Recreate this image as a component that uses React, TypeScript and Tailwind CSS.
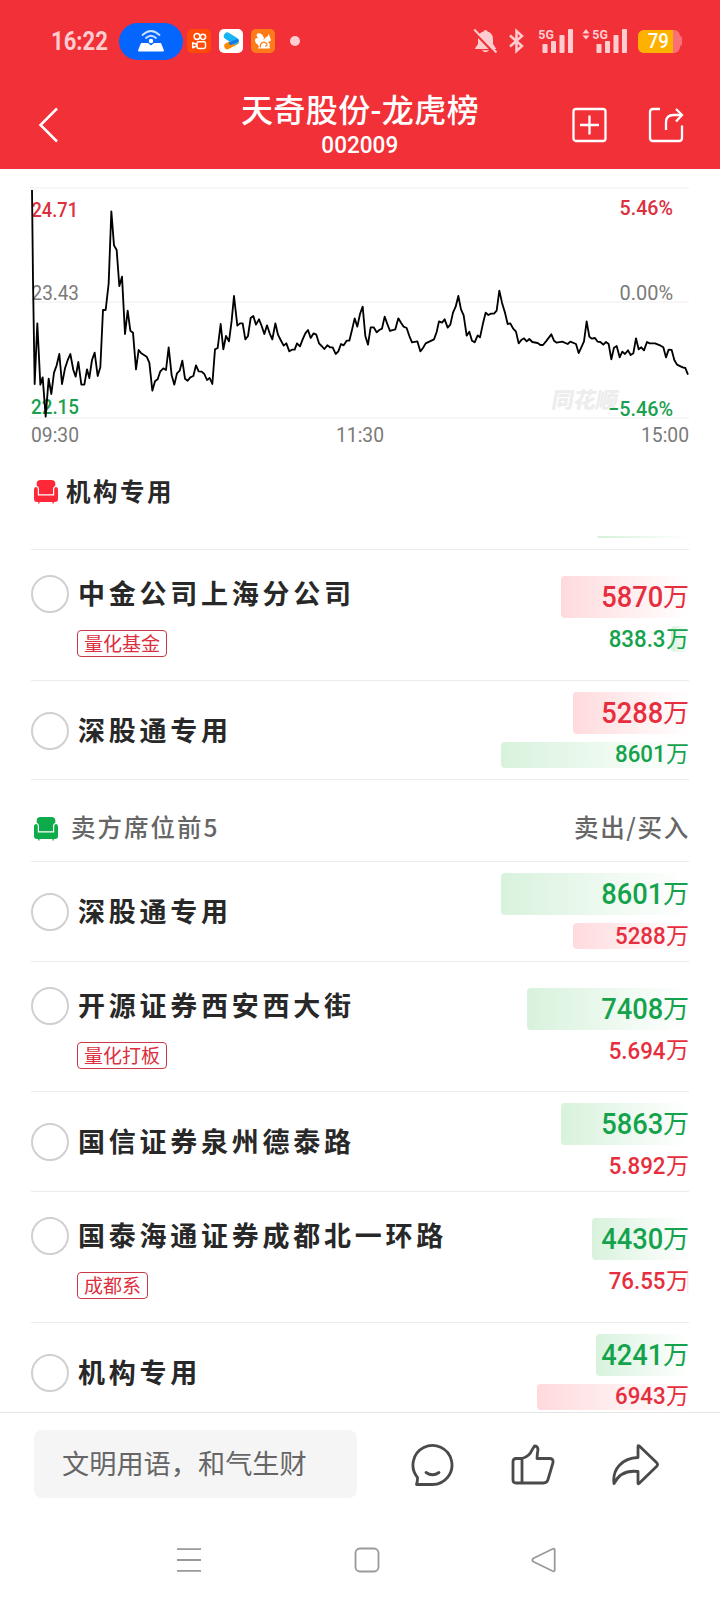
import clsx from "clsx"

type Side = "buy" | "sell"

interface Seat {
  name: string
  tag?: string
  buy: number
  sell: number
}

const buySeats: Seat[] = [
  { name: "中金公司上海分公司", tag: "量化基金", buy: 5870, sell: 838.3 },
  { name: "深股通专用", buy: 5288, sell: 8601 },
]

const sellSeats: Seat[] = [
  { name: "深股通专用", buy: 5288, sell: 8601 },
  { name: "开源证券西安西大街", tag: "量化打板", buy: 5.694, sell: 7408 },
  { name: "国信证券泉州德泰路", buy: 5.892, sell: 5863 },
  { name: "国泰海通证券成都北一环路", tag: "成都系", buy: 76.55, sell: 4430 },
  { name: "机构专用", buy: 6943, sell: 4241 },
]

const BAR_MAX = 188
const AMOUNT_MAX = 8601

// price line, in thirds of a pixel
const price =
  "36,30 39,300 44,612 52,430 61,614 68,592 77,710 86,596 94,642 102,578 110,556 118,522 126,612 135,565 144,538 151,522 160,570 167,590 175,546 184,614 193,614 201,568 208,594 216,540 224,518 233,588 241,562 249,390 257,390 266,310 274,94 282,196 290,210 298,318 306,290 315,462 323,392 331,452 339,458 348,568 356,510 364,520 380,530 388,548 397,632 405,604 413,598 421,574 430,565 438,570 446,502 455,586 463,614 471,580 479,572 487,542 495,596 503,602 511,592 520,588 528,556 536,574 545,575 553,582 561,600 569,594 577,612 585,508 593,504 602,432 610,508 618,468 627,484 635,422 642,348 652,437 660,430 668,430 676,478 684,468 692,414 700,408 708,434 717,418 725,438 733,462 741,436 749,460 757,478 766,430 774,464 782,480 791,497 799,490 808,514 816,509 824,509 831,490 840,499 848,478 856,460 864,450 872,474 881,460 889,464 897,490 905,498 913,507 922,496 930,502 938,502 947,522 955,514 963,492 971,496 980,482 988,482 996,450 1004,415 1012,440 1020,402 1028,380 1036,468 1044,494 1052,442 1061,442 1070,457 1078,450 1086,446 1094,410 1102,432 1110,453 1126,448 1135,415 1143,428 1151,440 1160,444 1168,468 1176,487 1192,484 1201,514 1209,504 1217,490 1242,478 1250,456 1257,424 1266,428 1274,418 1283,443 1291,434 1299,398 1307,380 1315,348 1323,388 1331,406 1340,467 1348,455 1356,482 1364,487 1373,466 1380,472 1389,430 1397,398 1405,405 1413,401 1422,401 1430,392 1438,332 1446,368 1455,398 1463,432 1471,430 1479,445 1488,455 1496,490 1504,480 1512,475 1520,484 1528,477 1537,486 1553,489 1561,495 1569,495 1578,484 1594,463 1602,482 1610,488 1627,485 1643,492 1651,485 1668,492 1676,519 1684,502 1692,484 1700,424 1708,470 1716,476 1725,474 1733,485 1741,486 1750,494 1758,486 1766,492 1774,538 1782,503 1790,498 1799,532 1807,515 1815,522 1824,511 1832,525 1840,520 1848,475 1856,508 1864,502 1872,511 1881,486 1889,490 1905,490 1922,497 1930,502 1938,532 1946,509 1955,510 1963,540 1971,554 1988,562 1996,564 2004,584"

const chartLabels = [
  { text: "24.71", x: 11.5, y: 36.5, width: 46.5, fill: "#dc2f40", weight: 500 },
  { text: "23.43", x: 11.5, y: 119.5, width: 47.5, fill: "#7a7a7a", weight: 400 },
  { text: "22.15", x: 11, y: 233.5, width: 48, fill: "#1ba050", weight: 500 },
  { text: "5.46%", x: 599.5, y: 34.5, width: 53.5, fill: "#dc2f40", weight: 500 },
  { text: "0.00%", x: 599.5, y: 119.5, width: 53.5, fill: "#7a7a7a", weight: 400 },
  { text: "−5.46%", x: 588, y: 235.5, width: 65, fill: "#1ba050", weight: 500 },
  { text: "09:30", x: 11, y: 261.5, width: 48, fill: "#7a7a7a", weight: 400 },
  { text: "11:30", x: 316, y: 261.5, width: 48, fill: "#7a7a7a", weight: 400 },
  { text: "15:00", x: 621, y: 261.5, width: 48, fill: "#7a7a7a", weight: 400 },
]

const Signal = () => (
  <svg className="-ml-0.5 overflow-visible" width="38" height="26" viewBox="-2 0 38 26" fill="#ffcdd0">
    <text x="-0.7" y="11" fontSize="13.5" fontWeight="700" textLength="15.5" lengthAdjust="spacingAndGlyphs" fontFamily="Roboto, sans-serif">
      5G
    </text>
    <rect x="3.5" y="16" width="5" height="9" rx="0.8" />
    <rect x="12" y="13" width="5" height="12" rx="0.8" />
    <rect x="20.5" y="7" width="5" height="18" rx="0.8" />
    <rect x="29" y="1" width="5" height="24" rx="0.8" />
  </svg>
)

const StatusBar = () => (
  <div className="flex h-[82px] items-center pl-[51px]">
    <span className="w-[68px] shrink-0 origin-left scale-x-[0.85] text-[26px] font-bold leading-none text-[#ffcdd0]">
      16:22
    </span>
    <div className="flex h-[37px] w-16 items-center justify-center rounded-full bg-[#0566ff]">
      <svg width="28" height="22" viewBox="0 0 28 22" fill="none">
        <path d="M5.5 5Q14-3 22.5 5M9 8q5-4.500 10 0" stroke="#cfe0ff" strokeWidth="1.8" strokeLinecap="round" />
        <circle cx="14" cy="11" r="2.2" fill="#fff" />
        <path d="M4 13h7l3 2.500 3-2.500h7L27 20.500q0 1-1 1H2q-1 0-1-1z" fill="#fff" />
      </svg>
    </div>
    <div className="ml-1 flex gap-2">
      <svg width="24" height="24" viewBox="0 0 24 24" fill="none" stroke="#fff" strokeWidth="1.5">
        <rect width="24" height="24" rx="5" fill="#ff4a08" stroke="none" />
        <circle cx="10" cy="7.5" r="2.9" />
        <circle cx="16" cy="7.8" r="2.6" />
        <rect x="10" y="12.8" width="8.5" height="6.6" rx="1.7" />
        <path d="M10 15.5l-4.300-1.800v5l4.300-1.800" strokeLinejoin="round" />
      </svg>
      <svg width="24" height="24" viewBox="0 0 24 24" fill="none">
        <rect width="24" height="24" rx="5" fill="#fff" />
        <path d="M8.5 17L16.500 12.700" stroke="#ff8a00" strokeWidth="6.5" strokeLinecap="round" />
        <path d="M8.3 7L16.300 12" stroke="#18b4f5" strokeWidth="7" strokeLinecap="round" />
        <path d="M11.5 14.500l6.500-2.800" stroke="#1677e8" strokeWidth="3" strokeLinecap="round" />
      </svg>
      <svg width="24" height="24" viewBox="0 0 24 24" fill="none">
        <rect width="24" height="24" rx="5" fill="#ff7b1a" />
        <path d="M7 19.5q2-2.500-1-4.500-3-2.500-1.500-5.500L7 9Q4.500 6.500 6.500 4.500 9.500 3.500 11.500 6t1 5q2-3 4.500-4V5q2 1 2 3.500 1.500 1.500.5 3.500l-2.500 1q2.500 2 1.500 4.500.8 1 0 2z" fill="#fff" />
        <path d="M9.500 18.500c-1-4 2.500-6.500 5.500-4.500 1.800 1.300 1 3.500-1 3" stroke="#ff7b1a" strokeWidth="1.200" />
      </svg>
    </div>
    <span className="ml-[15px] size-2.5 rounded-full bg-[#ffcdd0]" />
    <div className="ml-auto mr-[38px] flex items-center">
      <svg className="mr-[11px]" width="25" height="26" viewBox="0 0 25 26" fill="#ffcdd0">
        <path d="M12.500 2a2 2 0 0 1 2 1.500c3.600.9 5.500 3.700 5.500 7.500v5l3 4.500v.5H2v-.5L5 16v-5c0-3.800 1.900-6.600 5.500-7.500a2 2 0 0 1 2-1.500zM9 22.200h7c-1 2.400-6 2.400-7 0z" />
        <path d="M.5 3L22.500 26" stroke="#f13037" strokeWidth="3" />
        <path d="M1.200 1.500L23.500 24.500" stroke="#ffcdd0" strokeWidth="2" />
      </svg>
      <svg className="mr-[15px]" width="15" height="26" viewBox="0 0 15 26" fill="none" stroke="#ffcdd0" strokeWidth="2.5">
        <path d="M1 7.500L13 18l-5.500 5V3L13 8 1 18.500" />
      </svg>
      <Signal />
      <svg className="ml-[7px] mr-[3px]" width="8" height="26" viewBox="0 0 8 26" fill="#ffcdd0">
        <path d="M4 1l3.500 4.500h-7zM4 11.500L.5 7.500h7z" />
      </svg>
      <Signal />
      <div className="ml-[9px] flex h-[23px] items-center">
        <div className="flex h-full w-[42px] overflow-hidden rounded-[6px] bg-[#fa7077]">
          <div className="flex w-[35px] items-center justify-center bg-[#ffb100] pl-1.5">
            <span className="scale-x-[0.93] text-[20px] font-medium leading-none text-white">79</span>
          </div>
        </div>
        <span className="h-2.5 w-[2px] rounded-r-sm bg-[#fa7077]" />
      </div>
    </div>
  </div>
)

const Header = () => (
  <header className="h-[169px] shrink-0 bg-[#f13037] text-white">
    <StatusBar />
    <div className="flex h-[87px] items-start justify-between pl-[38px] pr-[36px]">
      <svg className="mt-[25px]" width="110" height="36" viewBox="0 0 110 36" fill="none" stroke="#fff" strokeWidth="2.5">
        <path d="M19 1.500L2.500 18 19 34.500" />
      </svg>
      <div className="flex flex-col items-center pt-[10px]">
        <h1 className="font-[Roboto,'Noto_Sans_CJK_SC',sans-serif] text-[32px] font-medium leading-[38px] tracking-[0.4px]">
          天奇股份-龙虎榜
        </h1>
        <p className="scale-x-[0.92] text-[24.5px] font-medium leading-[30px]">002009</p>
      </div>
      <div className="mt-[25px] flex gap-[41px]">
        <svg width="35" height="36" viewBox="0 0 35 36" fill="none" stroke="#fff" strokeWidth="2.3">
          <rect x="1.500" y="2" width="32" height="32" rx="2.500" />
          <path d="M17.500 8.500v19M8 18h19" />
        </svg>
        <svg width="36" height="36" viewBox="0 0 36 36" fill="none" stroke="#fff" strokeWidth="2.300">
          <path d="M12 2H5Q2 2 2 5v26q0 3 3 3h26q3 0 3-3V18.500" />
          <path d="M18 23v-7.500Q18 8 25.500 8H34" />
          <path d="M28 2l6 6-6 6.500" />
        </svg>
      </div>
    </div>
  </header>
)

const Chart = () => (
  <svg className="mx-5 mt-[11px] shrink-0" width="680" height="270" viewBox="0 0 680 270">
    <g fill="#f5f5f5">
      <rect x="10" y="7" width="659" height="1.7" />
      <rect x="10" y="121.200" width="659" height="1.7" />
      <rect x="10" y="237" width="659" height="1.7" />
    </g>
    <text x="531" y="228" fontSize="22" fontWeight="900" fill="#ededed" transform="translate(40 0) skewX(-10)" fontFamily="'Noto Sans CJK SC', sans-serif">
      同花顺
    </text>
    {chartLabels.map((label) => (
      <text
        key={label.text}
        x={label.x}
        y={label.y}
        fill={label.fill}
        fontSize="20"
        fontWeight={label.weight}
        textLength={label.width}
        lengthAdjust="spacingAndGlyphs"
      >
        {label.text}
      </text>
    ))}
    <polyline points={price} transform="scale(0.33333)" fill="none" stroke="#000" strokeWidth="5.5" strokeLinejoin="round" />
  </svg>
)

const Sofa = ({ className }: { className: string }) => (
  <svg className={className} width="24" height="26" viewBox="0 0 24 26" fill="currentColor">
    <path d="M6.500 1h11Q21.300 1 21.300 4.500v2.300q-2.300.7-2.300 3.200v5.200H5v-5.200Q5 7.500 2.700 6.800V4.500Q2.700 1 6.500 1z" />
    <path d="M1.900 8Q3.800 8 3.800 10v6.400h16.400V10q0-2 1.900-2Q24 8 24 10.500V20q0 3-3 3h-1.200v1.500h-1.300V23H5.500v1.500H4.200V23H3q-3 0-3-3v-9.500Q0 8 1.900 8z" />
  </svg>
)

const Amount = ({ value, side, large }: { value: number; side: Side; large?: boolean }) => (
  <div className={clsx("relative flex w-full items-center justify-end", large ? "h-[42px]" : "h-[26px]")}>
    <div
      className={clsx(
        "absolute inset-y-0 right-0 rounded-l-[4px] bg-linear-to-r to-white",
        side === "buy" ? "from-[#ffdadd]" : "from-[#d8f2dd]",
      )}
      style={{ width: (value / AMOUNT_MAX) * BAR_MAX }}
    />
    <p
      className={clsx(
        "relative flex items-center font-medium leading-none",
        side === "buy" ? "text-[#e62e3e]" : "text-[#14a34c]",
        large ? "text-[30px]" : "text-[24.5px]",
      )}
    >
      <span className="origin-right scale-x-[0.91]">{value}</span>
      <span
        className={clsx(
          "font-['Noto_Sans_CJK_SC',sans-serif] font-normal",
          large ? "-mt-[4px] text-[26px]" : "-mt-[4px] text-[23px]",
        )}
      >
        万
      </span>
    </p>
  </div>
)

const SeatRow = ({ seat, side }: { seat: Seat; side: Side }) => {
  const other = side === "buy" ? "sell" : "buy"
  return (
    <div
      className={clsx(
        "flex shrink-0 justify-between border-t border-[#ebebeb]",
        seat.tag ? "h-[130.5px]" : "h-[99.8px]",
      )}
    >
      <div className={clsx("flex flex-col", seat.tag ? "pt-[25px]" : "pt-[31px]")}>
        <div className="flex h-[38px] items-center gap-[9px]">
          <span className="size-[38px] rounded-full border-2 border-[#d0d0d0]" />
          <h3 className="-mt-[3px] whitespace-nowrap font-['Noto_Sans_CJK_SC',sans-serif] text-[27px] font-bold leading-none tracking-[3.75px] text-[#282828]">
            {seat.name}
          </h3>
        </div>
        {seat.tag && (
          <span className="ml-[46px] mt-[17px] flex h-[27px] items-center self-start rounded-[4px] border border-[#c83a48] px-1.5 pb-[2px] font-['Noto_Sans_CJK_SC',sans-serif] text-[19px] leading-none text-[#dc2f40]">
            {seat.tag}
          </span>
        )}
      </div>
      <div className={clsx("flex w-[188px] flex-col gap-2", seat.tag ? "pt-[26px]" : "pt-[11px]")}>
        <Amount value={seat[side]} side={side} large />
        <Amount value={seat[other]} side={other} />
      </div>
    </div>
  )
}

const Footer = () => (
  <footer className="h-[192px] shrink-0 border-t border-[#e6e6e6] bg-white">
    <div className="flex h-[102px] items-center pl-[34px] pr-[61px]">
      <div className="flex h-[68px] w-[323px] items-center rounded-lg bg-[#f5f5f5] pb-[3px] pl-7 font-['Noto_Sans_CJK_SC',sans-serif] text-[27.2px] text-[#666]">
        文明用语，和气生财
      </div>
      <div className="ml-auto flex gap-[57px] pt-[2px]">
        <svg width="43" height="44" viewBox="0 0 43 44" fill="none" stroke="#4a4a4a" strokeWidth="2.8" strokeLinejoin="round" strokeLinecap="round">
          <path d="M6.500 34.500A19.500 19.500 0 1 1 21.500 41.500H5.500q1.200-3.500 1-7z" />
          <path d="M15 29.500q6.500 4.600 13 0" />
        </svg>
        <svg width="44" height="44" viewBox="0 0 44 44" fill="none" stroke="#4a4a4a" strokeWidth="2.800" strokeLinejoin="round">
          <path d="M11 15.500H5Q2 15.500 2 18.500V37q0 3 3 3h27.500q3.600 0 4.500-3.500L42 19.500q.6-4-3.500-4H26q.2-4.500 1-9Q27 3 23.500 3L21 7q-2.500 6.500-10 8.500V40" />
        </svg>
        <svg width="47" height="44" viewBox="0 0 47 44" fill="none" stroke="#4a4a4a" strokeWidth="2.800" strokeLinejoin="round">
          <path d="M26 3.500q0-1.500 1.300-.5L44.500 19.500q2 2 0 4L27 40.500q-1 .8-1-.5V28.500C14 27 6.500 31.500 2 40.500 0 26 10.500 15 26 14.500z" />
        </svg>
      </div>
    </div>
    <div className="flex h-[89px] items-start justify-between pl-[176px] pr-[163px] pt-[32px]">
      <svg width="26" height="26" viewBox="0 0 26 26" fill="none" stroke="#999" strokeWidth="1.8">
        <path d="M1 2.200h24M1 13h24M1 23.800h24" />
      </svg>
      <svg width="26" height="26" viewBox="0 0 26 26" fill="none" stroke="#999" strokeWidth="1.8">
        <rect x="1.500" y="1.500" width="23" height="23" rx="4.500" />
      </svg>
      <svg width="26" height="26" viewBox="0 0 26 26" fill="none" stroke="#999" strokeWidth="1.8" strokeLinejoin="round">
        <path d="M2.500 11.200L21.500 2q2.200-.9 2.200 1v20q0 1.900-2.200 1L2.500 14.800q-2.500-1.800 0-3.600z" />
      </svg>
    </div>
  </footer>
)

const App = () => {
  return (
    <div className="flex h-[1604px] w-[720px] flex-col overflow-hidden bg-white font-[Roboto,'Noto_Sans_CJK_SC',sans-serif]">
      <Header />
      <Chart />
      <main className="flex h-[962px] shrink-0 flex-col overflow-hidden px-[31px]">
        <div className="flex h-[86px] shrink-0 items-center pb-[2px]">
          <Sofa className="ml-[3px] text-[#ff2839]" />
          <h2 className="-mt-[2px] ml-2 font-['Noto_Sans_CJK_SC',sans-serif] text-[24.5px] font-bold leading-none tracking-[2.5px] text-[#282828]">
            机构专用
          </h2>
        </div>
        {/* tail of the row scrolled under the sticky title */}
        <div className="flex h-[13px] shrink-0 items-start justify-end">
          <div className="h-0.5 w-[92px] rounded-bl-[4px] bg-linear-to-r from-[#d4f1da] to-white" />
        </div>
        {buySeats.map((seat) => (
          <SeatRow key={seat.name} seat={seat} side="buy" />
        ))}
        <div className="flex h-[81.8px] shrink-0 items-center justify-between border-t border-[#ebebeb] pt-[13px] font-['Noto_Sans_CJK_SC',sans-serif] text-[24.5px] font-medium leading-none text-[#666]">
          <div className="flex items-center">
            <Sofa className="ml-[3px] mt-[3px] text-[#0dab4a]" />
            <h2 className="ml-[13px] tracking-[2px]">卖方席位前5</h2>
          </div>
          <p className="-mr-[1px] tracking-[1.7px]">卖出/买入</p>
        </div>
        {sellSeats.map((seat) => (
          <SeatRow key={seat.name} seat={seat} side="sell" />
        ))}
      </main>
      <Footer />
    </div>
  )
}

export default App
